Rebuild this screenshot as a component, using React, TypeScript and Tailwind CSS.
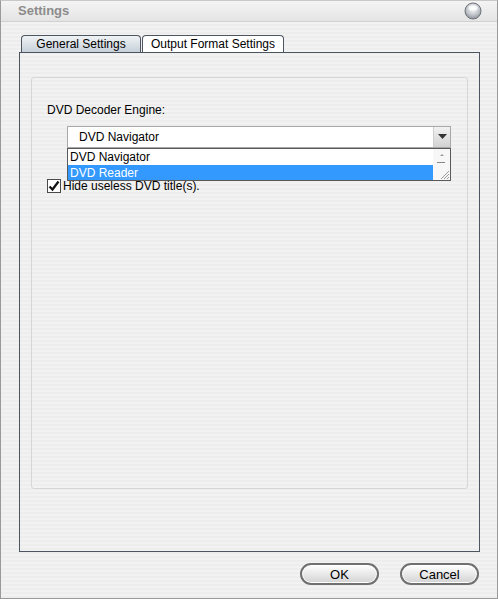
import React from 'react'

const font = { fontFamily: '"Liberation Sans", Arial, sans-serif' }

function CloseDot() {
  return (
    <svg width="18" height="18" viewBox="0 0 18 18">
      <defs>
        <radialGradient id="dot" cx="50%" cy="35%" r="65%">
          <stop offset="0%" stopColor="#ffffff" />
          <stop offset="55%" stopColor="#c9cdd2" />
          <stop offset="100%" stopColor="#8d939a" />
        </radialGradient>
      </defs>
      <circle cx="9" cy="9" r="8" fill="url(#dot)" stroke="#6e7378" strokeWidth="1" />
      <ellipse cx="9" cy="6" rx="4.5" ry="2.5" fill="#ffffff" opacity="0.8" />
    </svg>
  )
}

function PillButton({ label }: { label: string }) {
  return (
    <button className="h-[22px] w-[79px] rounded-full border-2 border-[#707070] bg-[linear-gradient(#ffffff,#e9e9e9_50%,#d2d2d2)] text-[13px] leading-none text-black shadow-[inset_0_0_0_1px_#ffffff]">
      {label}
    </button>
  )
}

export default function App() {
  return (
    <div
      className="relative flex h-[599px] w-[498px] flex-col overflow-hidden border border-[#9a9a9a] border-t-[#c8c8c8] bg-[repeating-linear-gradient(0deg,#ededed_0px,#ededed_2px,#f2f2f2_2px,#f2f2f2_4px)] text-black"
      style={font}
    >
      {/* title bar */}
      <div className="flex h-[21px] items-center justify-between border-b border-[#d0d0d0] bg-[linear-gradient(#f4f4f4,#e4e4e4)] pl-[17px] pr-[15px]">
        <span className="text-[13px] font-bold text-[#8c8c8c]">Settings</span>
        <CloseDot />
      </div>

      {/* tabs */}
      <div className="ml-[20px] mt-[13px] flex h-[17px] items-end">
        <div className="flex h-[17px] w-[120px] items-center justify-center rounded-t-[4px] border border-b-0 border-[#4d5660] bg-[linear-gradient(#f0f3f5,#c6d0d8)] text-[12px] text-black">
          General Settings
        </div>
        <div className="ml-px flex h-[17px] w-[142px] items-center justify-center rounded-t-[4px] border border-b-0 border-[#4d5660] bg-white text-[12px] text-black">
          Output Format Settings
        </div>
      </div>

      {/* panel */}
      <div className="ml-[18px] h-[500px] w-[461px] border border-[#4d5660] pl-[11px] pt-[24px]">
        <div className="relative h-[412px] w-[437px] rounded-[3px] border border-[#d6d6d6] pl-[15px] pt-[25px]">
          <div className="text-[12px] leading-[15px]">DVD Decoder Engine:</div>

          {/* combobox */}
          <div className="ml-[20px] mt-[8px] flex h-[22px] w-[384px] border border-[#a8a8a8] bg-white">
            <div className="flex flex-1 items-center pl-[11px] text-[12px]">DVD Navigator</div>
            <div className="flex w-[17px] items-center justify-center border-l border-[#cfcfcf] bg-[linear-gradient(#f2f2f2,#d2d2d2)]">
              <svg width="9" height="6" viewBox="0 0 9 6">
                <path d="M0 0h9L4.5 5z" fill="#333" />
              </svg>
            </div>
          </div>

          {/* checkbox */}
          <div className="mt-[31px] flex items-end gap-[2px]">
            <div className="flex h-[14px] w-[14px] items-center justify-center border border-[#4a4a4a] bg-white">
              <svg width="12" height="12" viewBox="0 0 12 12">
                <path d="M1.5 6.5l3 3 6-8" fill="none" stroke="#111" strokeWidth="2.2" />
              </svg>
            </div>
            <span className="text-[12px] leading-[13px]">Hide useless DVD title(s).</span>
          </div>

          {/* open list */}
          <div className="absolute left-[35px] top-[70px] flex h-[33px] w-[384px] border border-[#5a5a5a] bg-white">
            <div className="flex flex-1 flex-col text-[12px]">
              <div className="flex h-[16px] items-center pl-[2px]">DVD Navigator</div>
              <div className="flex h-[15px] items-center bg-[#3399ff] pl-[2px] text-white">DVD Reader</div>
            </div>
            <div className="relative w-[17px] bg-[#f7f7f7]">
              <div className="absolute left-[7px] top-[5px] h-0 w-0 border-x-[2px] border-b-[2px] border-x-transparent border-b-[#999]" />
              <div className="absolute left-[4px] top-[13px] h-px w-[8px] bg-[#888]" />
              <svg className="absolute bottom-0 right-0" width="11" height="11" viewBox="0 0 11 11">
                <path d="M10 2L2 10M10 5L5 10M10 8L8 10" stroke="#999" strokeWidth="1" />
              </svg>
            </div>
          </div>
        </div>
      </div>

      {/* buttons */}
      <div className="mt-[11px] flex justify-end gap-[21px] pr-[18px]">
        <PillButton label="OK" />
        <PillButton label="Cancel" />
      </div>
    </div>
  )
}
